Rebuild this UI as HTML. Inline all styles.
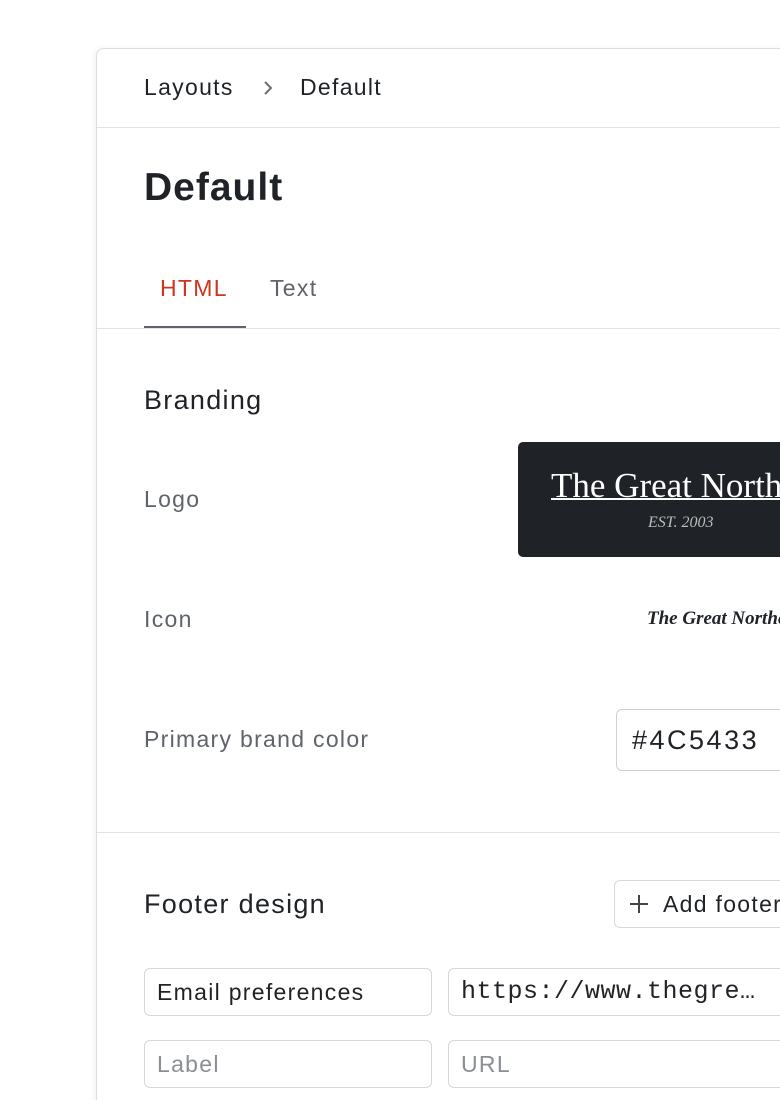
<!DOCTYPE html>
<html><head><style>
html,body{margin:0;width:780px;height:1100px;overflow:hidden}
body{position:relative;background:#fff;font-family:"Liberation Sans",sans-serif;color:#1f2226;letter-spacing:1.3px}
.card{position:absolute;left:96px;top:48px;width:800px;height:1100px;border:1px solid #dcdde0;border-radius:8px;box-shadow:-2px 0 6px rgba(0,0,0,.05);background:#fff}
.a{position:absolute;white-space:nowrap}
.hr{position:absolute;left:97px;right:0;height:1px;background:#e2e3e6}
.lbl{font-size:23px;color:#5f636b}
.inp{position:absolute;border:1px solid #d6d8db;border-radius:6px;height:48px;box-sizing:border-box;font-size:23px;line-height:46px;padding-left:12px;white-space:nowrap;overflow:hidden}
</style></head><body>
<div class="card"></div>
<div class="a" style="left:144px;top:74px;font-size:23px">Layouts</div>
<svg class="a" style="left:261px;top:79px" width="14" height="18"><path d="M4 3l6 6-6 6" stroke="#6b6f76" stroke-width="2" fill="none"/></svg>
<div class="a" style="left:300px;top:74px;font-size:23px">Default</div>
<div class="hr" style="top:127px"></div>
<div class="a" style="left:144px;top:166px;font-size:39px;font-weight:bold;letter-spacing:1px">Default</div>
<div class="a" style="left:160px;top:275px;font-size:23px;color:#d0341c">HTML</div>
<div class="a" style="left:270px;top:275px;font-size:23px;color:#5f636b">Text</div>
<div class="a" style="left:144px;top:326px;width:102px;height:2px;background:#5f636b"></div>
<div class="hr" style="top:328px"></div>
<div class="a" style="left:144px;top:385px;font-size:27px">Branding</div>
<div class="a lbl" style="left:144px;top:486px">Logo</div>
<div class="a" style="left:518px;top:442px;width:280px;height:115px;background:#1f2226;border-radius:5px;overflow:hidden;letter-spacing:0">
 <div class="a" style="left:33px;top:24px;font-family:'Liberation Serif',serif;font-size:35px;color:#fff;text-decoration:underline;text-decoration-thickness:2px">The Great Northern</div>
 <div class="a" style="left:130px;top:72px;font-family:'Liberation Serif',serif;font-style:italic;font-size:16px;color:#bbb">EST. 2003</div>
</div>
<div class="a lbl" style="left:144px;top:606px">Icon</div>
<div class="a" style="left:647px;top:608px;font-family:'Liberation Serif',serif;font-style:italic;font-weight:bold;font-size:19px;letter-spacing:0">The Great Northern</div>
<div class="a lbl" style="left:144px;top:726px">Primary brand color</div>
<div class="inp" style="left:616px;top:709px;width:200px;height:62px;line-height:60px;font-size:27px;padding-left:15px;border-color:#cfd1d5;letter-spacing:2.5px">#4C5433</div>
<div class="hr" style="top:832px"></div>
<div class="a" style="left:144px;top:889px;font-size:27px">Footer design</div>
<div class="inp" style="left:614px;top:880px;width:200px;height:48px;font-size:23px;padding-left:48px">Add footer link</div>
<svg class="a" style="left:628px;top:893px" width="22" height="22"><path d="M11 2v18M2 11h18" stroke="#444" stroke-width="2"/></svg>
<div class="inp" style="left:144px;top:968px;width:288px">Email preferences</div>
<div class="inp" style="left:448px;top:968px;width:340px;font-family:'Liberation Mono',monospace;font-size:25px;letter-spacing:0.5px">https://www.thegre…</div>
<div class="inp" style="left:144px;top:1040px;width:288px;color:#8a8e95">Label</div>
<div class="inp" style="left:448px;top:1040px;width:340px;color:#8a8e95">URL</div>
</body></html>
